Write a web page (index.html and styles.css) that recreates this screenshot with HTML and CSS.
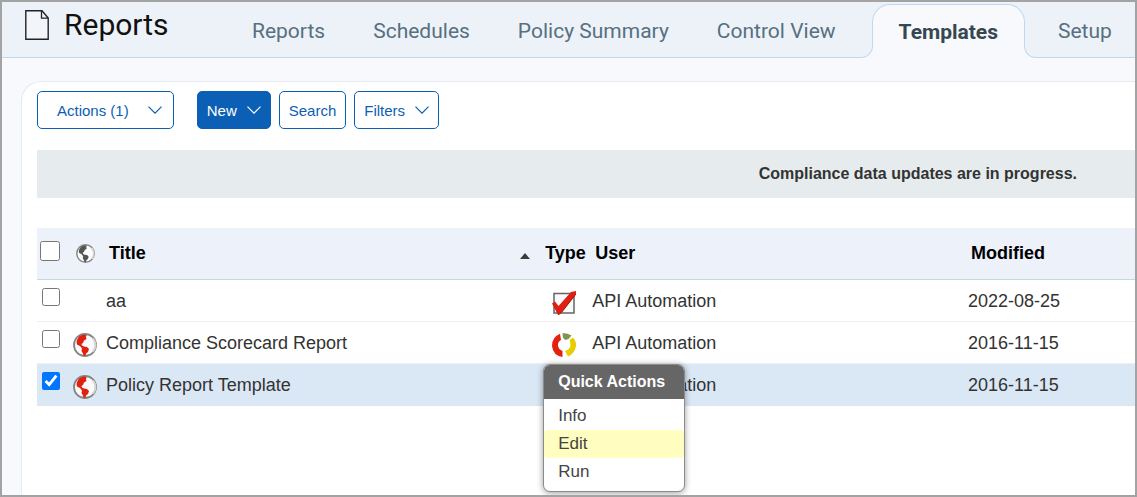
FILE: index.html
```html
<!DOCTYPE html>
<html lang="en">
<head>
    <meta charset="UTF-8">
    <meta name="viewport" content="width=device-width, initial-scale=1.0">
    <title>Reports - Templates</title>
    <link rel="stylesheet" href="styles.css">
</head>
<body>
    <!-- Shared icon shapes -->
    <svg class="sprite" width="0" height="0" aria-hidden="true">
        <symbol id="globe" viewBox="0 0 24 24">
            <circle cx="12" cy="12" r="11" fill="#fbfbfb" stroke="#858585" stroke-width="1.8"/>
            <path d="M20 5.500a10 10 0 0 1 0 13" fill="none" stroke="#d6d6d6" stroke-width="2"/>
            <path fill="currentColor" d="M4 7 6 3.500l4-2 3.500.5-.5 2 .5 2-2.500 1.500-1 2.500-1.500 1 .5 1.500 2 1 3 .5 2 2-1 3-2 1.500-.5 2.500-2-.5-.5-2-1.500-2.500.5-2.500-2-2.500-3-1.500L3.500 9z"/>
        </symbol>
        <symbol id="chevron" viewBox="0 0 14 8">
            <path d="M.5.7 7 7.200 13.500.7" fill="none" stroke="currentColor" stroke-width="1.200"/>
        </symbol>
    </svg>

    <header class="topbar">
        <svg class="page-icon" width="24" height="30" viewBox="0 0 24 30" aria-hidden="true">
            <path d="M.8.800H17L23.200 8v21.200H.8z" fill="#f3f5f8" stroke="#1d252c" stroke-width="1.400"/>
            <path d="M16.500.8V8.200h6.700" fill="none" stroke="#1d252c" stroke-width="1.300"/>
        </svg>
        <h1>Reports</h1>
        <nav class="tabs">
            <a href="#">Reports</a>
            <a href="#">Schedules</a>
            <a href="#">Policy Summary</a>
            <a href="#">Control View</a>
            <a href="#" class="active" aria-current="page">Templates</a>
            <a href="#">Setup</a>
        </nav>
    </header>

    <main class="panel">
        <div class="toolbar">
            <button type="button" class="btn btn-actions">Actions (1) <svg class="chevron"><use href="#chevron"/></svg></button>
            <button type="button" class="btn btn-primary">New <svg class="chevron"><use href="#chevron"/></svg></button>
            <button type="button" class="btn">Search</button>
            <button type="button" class="btn">Filters <svg class="chevron"><use href="#chevron"/></svg></button>
        </div>

        <div class="banner">Compliance data updates are in progress.</div>

        <table class="grid">
            <colgroup>
                <col class="col-check">
                <col class="col-globe">
                <col class="col-title">
                <col class="col-type">
                <col>
                <col class="col-modified">
            </colgroup>
            <thead>
                <tr>
                    <th class="check"><input type="checkbox" aria-label="Select all"></th>
                    <th class="globe"><svg><use href="#globe"/></svg></th>
                    <th><div class="sortable">Title <svg class="sort" width="10" height="6" viewBox="0 0 10 6"><path d="M5 0 10 6H0z" fill="#3c3c3c"/></svg></div></th>
                    <th>Type</th>
                    <th>User</th>
                    <th>Modified</th>
                </tr>
            </thead>
            <tbody>
                <tr>
                    <td class="check"><input type="checkbox" aria-label="Select aa"></td>
                    <td class="globe"></td>
                    <td>aa</td>
                    <td class="type">
                        <svg width="24" height="24" viewBox="0 0 24 24" role="img" aria-label="Policy report">
                            <path d="M2 2.500h20v19.500h-20z" fill="#fafafa" stroke="#666" stroke-width="1.500"/>
                            <path d="M0 12.500l3-2 3.500 4.500L19 1 24 0v3L9.500 21.500 6 24z" fill="#df1f14"/>
                            <path d="M24 3 9.500 21.500 6 24" fill="none" stroke="#a5160f" stroke-width="1"/>
                        </svg>
                    </td>
                    <td>API Automation</td>
                    <td>2022-08-25</td>
                </tr>
                <tr>
                    <td class="check"><input type="checkbox" aria-label="Select Compliance Scorecard Report"></td>
                    <td class="globe"><svg><use href="#globe"/></svg></td>
                    <td>Compliance Scorecard Report</td>
                    <td class="type">
                        <svg width="24" height="24" viewBox="0 0 24 24" role="img" aria-label="Scorecard report">
                            <path d="M8 .800 9 7Q5.500 9 6 12.500 6.500 16.500 10.500 18V24Q1 22.500 0 13 0 4 8 .8z" fill="#e1230f"/>
                            <path d="M10.500 0Q16 0 19.500 2.500L16.500 6 13.500 7 11 5z" fill="#7f9550"/>
                            <path d="M17.500 7 21 4.500Q24.500 8 24 13 23 20.500 16 23.500L13 18Q18.500 16 18.500 12 18.500 9 17.500 7z" fill="#e6ce00"/>
                        </svg>
                    </td>
                    <td>API Automation</td>
                    <td>2016-11-15</td>
                </tr>
                <tr class="selected">
                    <td class="check"><input type="checkbox" aria-label="Select Policy Report Template" checked></td>
                    <td class="globe"><svg><use href="#globe"/></svg></td>
                    <td>Policy Report Template</td>
                    <td class="type">
                        <div class="menu">
                            <h2>Quick Actions</h2>
                            <ul>
                                <li><button type="button">Info</button></li>
                                <li><button type="button" class="hover">Edit</button></li>
                                <li><button type="button">Run</button></li>
                            </ul>
                        </div>
                    </td>
                    <td>API Automation</td>
                    <td>2016-11-15</td>
                </tr>
            </tbody>
        </table>
    </main>
</body>
</html>
```

FILE: styles.css
```css
* {
    box-sizing: border-box;
}
body {
    display: flex;
    flex-direction: column;
    margin: 0;
    min-height: 100vh;
    border: 2px solid #a3a3a3;
    background: #f7f9fd;
    color: #333;
    font-family: "Liberation Sans", Arial, sans-serif;
    font-size: 18px;
}
.sprite {
    position: absolute;
}

/* Top bar */
.topbar {
    display: flex;
    height: 56px;
    padding-left: 23px;
    background: #edf2f9;
    border-bottom: 1px solid #c1d8ea;
    font-family: Roboto, sans-serif;
}
.page-icon {
    flex: none;
    margin-top: 8px;
}
h1 {
    flex: none;
    width: 164px;
    margin: 0 0 0 15px;
    color: #111;
    font-size: 30px;
    font-weight: 400;
    line-height: 46px;
}
.tabs {
    display: flex;
    white-space: nowrap;
}
.tabs a {
    padding: 0 24px;
    color: #56707f;
    font-size: 21px;
    line-height: 58px;
    text-decoration: none;
}
.tabs .active {
    position: relative;
    height: 54px;
    margin: 2px 9px 0 12px;
    padding: 0 26px;
    background: #f7f9fd;
    border: 1px solid #c1d8ee;
    border-bottom: 0;
    border-radius: 18px 18px 0 0;
    color: #36474f;
    font-weight: 700;
    line-height: 54px;
}
/* Curved feet of the active tab */
.tabs .active::before,
.tabs .active::after {
    content: "";
    position: absolute;
    bottom: 0;
    width: 14px;
    height: 14px;
    border-bottom: 1px solid #c1d8ee;
    background: #edf2f9;
}
.tabs .active::before {
    right: 100%;
    border-right: 1px solid #c1d8ee;
    border-bottom-right-radius: 12px;
    box-shadow: 4px 4px 0 #f7f9fd;
}
.tabs .active::after {
    left: 100%;
    border-left: 1px solid #c1d8ee;
    border-bottom-left-radius: 12px;
    box-shadow: -4px 4px 0 #f7f9fd;
}

/* Content panel */
.panel {
    flex: 1;
    margin: 23px 0 0 19px;
    padding: 9px 0 0 15px;
    background: #fff;
    border: 1px solid #e6e9f1;
    border-width: 1px 0 0 1px;
    border-top-left-radius: 20px;
}
.toolbar {
    display: flex;
    gap: 8px;
}
.btn {
    display: flex;
    align-items: center;
    gap: 10px;
    height: 38px;
    padding: 0 9px;
    background: #fff;
    border: 1px solid #0b5fb4;
    border-radius: 5px;
    color: #0b5fb4;
    font-family: inherit;
    font-size: 15px;
    cursor: pointer;
}
.btn-actions {
    gap: 19px;
    margin-right: 15px;
    padding: 0 11px 0 19px;
}
.btn-primary {
    background: #0b5fb4;
    color: #fff;
}
.chevron {
    width: 14px;
    height: 8px;
}
.banner {
    margin: 21px 0 30px;
    padding-right: 58px;
    background: #e6ecee;
    font-size: 16px;
    font-weight: 700;
    line-height: 48px;
    text-align: right;
}

/* Template list */
.grid {
    width: 100%;
    table-layout: fixed;
    border-collapse: separate;
    border-spacing: 0;
}
.col-check {
    width: 34px;
}
.col-globe {
    width: 32px;
}
.col-title {
    width: 40%;
}
.col-type {
    width: 47px;
}
.col-modified {
    width: 170px;
}
.grid th {
    height: 52px;
    padding: 0 0 0 6px;
    background: #edf2fa;
    border-bottom: 1px solid #c1d8e8;
    color: #000;
    text-align: left;
}
.grid th:nth-child(4) {
    padding-left: 3px;
}
.grid td {
    height: 42px;
    padding: 2px 0 0 3px;
    border-bottom: 1px solid #f0f0f2;
}
.grid .selected td {
    background: #dae7f5;
    border-color: #dfe4ea;
}
.grid .check {
    padding: 0 0 8px 5px;
}
.grid th.check {
    padding: 0 0 6px 3px;
}
.check input {
    display: block;
    width: 18px;
    height: 18px;
    margin: 0;
    accent-color: #0075ff;
}
th.check input {
    width: 20px;
    height: 20px;
}
.grid .globe {
    padding: 5px 0 0 2px;
    color: #e1200f;
}
.globe svg {
    display: block;
    width: 24px;
    height: 24px;
}
.grid th.globe {
    padding: 0 0 0 5px;
    color: #555;
}
th.globe svg {
    width: 19px;
    height: 19px;
}
.sortable {
    display: flex;
    justify-content: space-between;
    align-items: center;
    padding-right: 12px;
}
.sort {
    margin-top: 4px;
}
.grid .type {
    position: relative;
    padding: 5px 0 0 10px;
}
.type svg {
    display: block;
}

/* Quick actions popup */
.menu {
    position: absolute;
    top: 0;
    left: 1px;
    z-index: 1;
    width: 142px;
    overflow: hidden;
    background: #fff;
    border: 1px solid #8c8c8c;
    border-radius: 7px;
    box-shadow: 0 1px 6px rgba(0, 0, 0, 0.4);
    font-size: 17px;
}
.menu h2 {
    margin: 0;
    padding-left: 14px;
    background: #666;
    color: #fff;
    font-size: 16px;
    line-height: 34px;
}
.menu ul {
    margin: 0;
    padding: 3px 0 5px;
    list-style: none;
}
.menu button {
    display: block;
    width: 100%;
    height: 28px;
    padding: 0 14px;
    background: none;
    border: 0;
    border-radius: 4px;
    color: #444;
    font: inherit;
    text-align: left;
    cursor: pointer;
}
.menu .hover,
.menu button:hover {
    background: #fffdc0;
}
```
